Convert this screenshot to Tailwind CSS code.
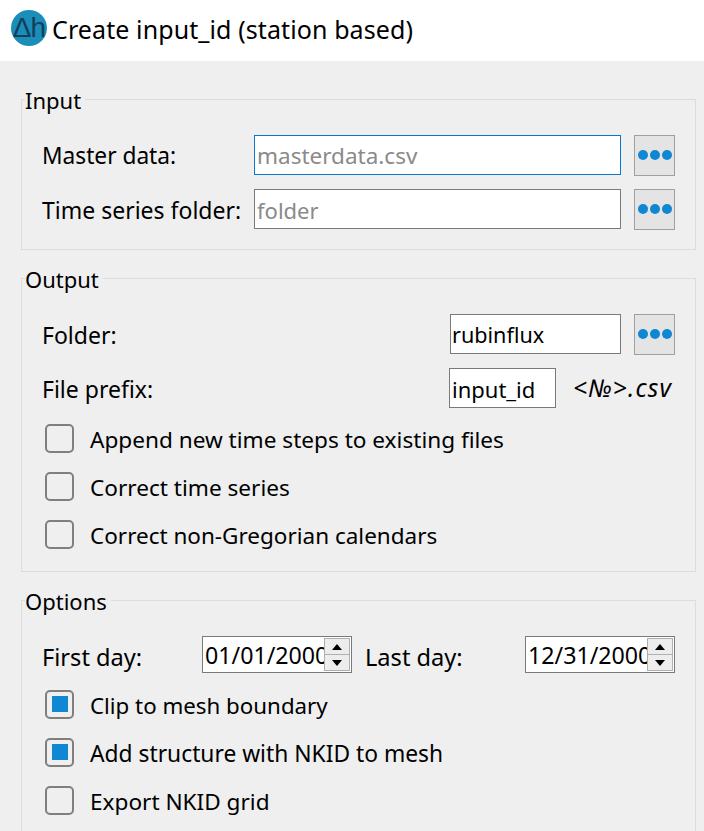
<!DOCTYPE html>
<html lang="en">
<head>
    <meta charset="UTF-8">
    <meta name="viewport" content="width=device-width, initial-scale=1.0">
    <title>Create input_id (station based)</title>
    <script src="https://cdn.jsdelivr.net/npm/@tailwindcss/browser@4"></script>
</head>
<body class="bg-[#efefef] text-black font-['Noto_Sans',sans-serif] text-[22px] leading-[28px] h-[831px] overflow-hidden">

    <!-- Title bar -->
    <div class="h-[61px] bg-white flex items-center pl-[11px] pb-[3px]">
        <div class="w-[36px] h-[36px] mb-[2px] rounded-full bg-[#1a8db8] text-[#143f5c] flex items-center justify-center text-[28px] leading-none tracking-[-1px] font-['Liberation_Sans',sans-serif] shrink-0 whitespace-nowrap">Δh</div>
        <span class="ml-[5px] text-[25px] tracking-[0.1px]">Create input_id (station based)</span>
    </div>

    <div class="pl-[21px] pr-[8px] pt-[24px]">
        <!-- Input -->
        <fieldset class="border border-[#dcdcdc] pl-[20px] pr-[19px] pt-[21px] pb-[20px] h-[165px]">
            <legend class="ml-[-17px] px-0 pr-[4px] pt-[1px]">Input</legend>
            <div class="flex items-center h-[40px]">
                <label class="w-[212px] text-[22.7px] pt-[2px]">Master data:</label>
                <div class="w-[367px] h-[40px] bg-white border-[1.5px] border-[#0a78d0] px-[2px] pt-[1px] flex items-center text-[#8a8a8a] text-[22.5px]">masterdata.csv</div>
                <button class="ml-[13px] w-[41px] h-[41px] bg-[#e4e4e4] border border-[#a0a0a0] flex items-center justify-center gap-[2px]">
                    <span class="w-[10px] h-[10px] rounded-full bg-[#0f87d2]"></span><span class="w-[10px] h-[10px] rounded-full bg-[#0f87d2]"></span><span class="w-[10px] h-[10px] rounded-full bg-[#0f87d2]"></span>
                </button>
            </div>
            <div class="flex items-center h-[40px] mt-[14px]">
                <label class="w-[212px] text-[23px] pt-[2px]">Time series folder:</label>
                <div class="w-[367px] h-[40px] bg-white border-[1.5px] border-[#7a7a7a] px-[2px] pt-[1px] flex items-center text-[#8a8a8a]">folder</div>
                <button class="ml-[13px] w-[41px] h-[41px] bg-[#e4e4e4] border border-[#a0a0a0] flex items-center justify-center gap-[2px]">
                    <span class="w-[10px] h-[10px] rounded-full bg-[#0f87d2]"></span><span class="w-[10px] h-[10px] rounded-full bg-[#0f87d2]"></span><span class="w-[10px] h-[10px] rounded-full bg-[#0f87d2]"></span>
                </button>
            </div>
        </fieldset>

        <!-- Output -->
        <fieldset class="border border-[#dcdcdc] pl-[20px] pr-[19px] pt-[21px] mt-[14px] h-[308px]">
            <legend class="ml-[-17px] px-0 pr-[4px] pt-[1px]">Output</legend>
            <div class="flex items-center h-[40px]">
                <label class="w-[408px] text-[23px] pt-[2px]">Folder:</label>
                <div class="w-[171px] h-[40px] bg-white border-[1.5px] border-[#7a7a7a] pl-[1px] pt-[2px] flex items-center text-[21.6px]">rubinflux</div>
                <button class="ml-[13px] w-[41px] h-[41px] bg-[#e4e4e4] border border-[#a0a0a0] flex items-center justify-center gap-[2px]">
                    <span class="w-[10px] h-[10px] rounded-full bg-[#0f87d2]"></span><span class="w-[10px] h-[10px] rounded-full bg-[#0f87d2]"></span><span class="w-[10px] h-[10px] rounded-full bg-[#0f87d2]"></span>
                </button>
            </div>
            <div class="flex items-center h-[40px] mt-[14px]">
                <label class="w-[407px] text-[23px] pt-[2px]">File prefix:</label>
                <div class="w-[107px] h-[40px] bg-white border-[1.5px] border-[#7a7a7a] px-[2px] pt-[1px] flex items-center">input_id</div>
                <span class="ml-[17px] italic whitespace-nowrap text-[24.5px] tracking-[1.2px]">&lt;№&gt;.csv</span>
            </div>
            <div class="flex items-center h-[28px] mt-[16px] ml-[3px]">
                <span class="w-[29px] h-[29px] rounded-[5px] border-2 border-[#7f7f7f]"></span>
                <span class="ml-[16px] pt-[4px] text-[22.6px]">Append new time steps to existing files</span>
            </div>
            <div class="flex items-center h-[28px] mt-[20px] ml-[3px]">
                <span class="w-[29px] h-[29px] rounded-[5px] border-2 border-[#7f7f7f]"></span>
                <span class="ml-[16px] pt-[4px] text-[22.6px]">Correct time series</span>
            </div>
            <div class="flex items-center h-[28px] mt-[20px] ml-[3px]">
                <span class="w-[29px] h-[29px] rounded-[5px] border-2 border-[#7f7f7f]"></span>
                <span class="ml-[16px] pt-[4px] text-[22.5px]">Correct non-Gregorian calendars</span>
            </div>
        </fieldset>

        <!-- Options -->
        <fieldset class="border border-[#dcdcdc] border-b-0 pl-[20px] pr-[19px] pt-[21px] mt-[14px] h-[245px]">
            <legend class="ml-[-17px] px-0 pr-[4px] pt-[1px]">Options</legend>
            <div class="flex items-center h-[37px]">
                <label class="w-[160px] text-[23.6px] pt-[4px]">First day:</label>
                <div class="w-[150px] h-[37px] bg-white border-[1.5px] border-[#7a7a7a] flex items-stretch">
                    <span class="w-[121px] pl-[2px] overflow-hidden whitespace-nowrap leading-[36px] text-[23.2px]">01/01/2000</span>
                    <div class="w-[26px] my-[1px] flex flex-col border border-[#b0b0b0] bg-[#ededed]">
                        <span class="flex-1 flex items-center justify-center border-b border-[#b0b0b0]"><svg width="10" height="6" viewBox="0 0 10 6"><path d="M5 0 L10 6 L0 6 Z" fill="#000"/></svg></span>
                        <span class="flex-1 flex items-center justify-center"><svg width="10" height="6" viewBox="0 0 10 6"><path d="M0 0 L10 0 L5 6 Z" fill="#000"/></svg></span>
                    </div>
                </div>
                <label class="ml-[13px] w-[160px] text-[23.6px] pt-[4px]">Last day:</label>
                <div class="w-[150px] h-[37px] bg-white border-[1.5px] border-[#7a7a7a] flex items-stretch">
                    <span class="w-[121px] pl-[2px] overflow-hidden whitespace-nowrap leading-[36px] text-[23.2px]">12/31/2000</span>
                    <div class="w-[26px] my-[1px] flex flex-col border border-[#b0b0b0] bg-[#ededed]">
                        <span class="flex-1 flex items-center justify-center border-b border-[#b0b0b0]"><svg width="10" height="6" viewBox="0 0 10 6"><path d="M5 0 L10 6 L0 6 Z" fill="#000"/></svg></span>
                        <span class="flex-1 flex items-center justify-center"><svg width="10" height="6" viewBox="0 0 10 6"><path d="M0 0 L10 0 L5 6 Z" fill="#000"/></svg></span>
                    </div>
                </div>
            </div>
            <div class="flex items-center h-[28px] mt-[17px] ml-[3px]">
                <span class="w-[29px] h-[29px] rounded-[5px] border-2 border-[#7f7f7f] flex items-center justify-center"><span class="w-[16px] h-[16px] bg-[#0f87d2]"></span></span>
                <span class="ml-[16px] pt-[4px] text-[22.3px]">Clip to mesh boundary</span>
            </div>
            <div class="flex items-center h-[28px] mt-[20px] ml-[3px]">
                <span class="w-[29px] h-[29px] rounded-[5px] border-2 border-[#7f7f7f] flex items-center justify-center"><span class="w-[16px] h-[16px] bg-[#0f87d2]"></span></span>
                <span class="ml-[16px] pt-[4px] text-[22.8px]">Add structure with NKID to mesh</span>
            </div>
            <div class="flex items-center h-[28px] mt-[20px] ml-[3px]">
                <span class="w-[29px] h-[29px] rounded-[5px] border-2 border-[#7f7f7f]"></span>
                <span class="ml-[16px] pt-[4px] text-[22.6px]">Export NKID grid</span>
            </div>
        </fieldset>
    </div>

</body>
</html>
